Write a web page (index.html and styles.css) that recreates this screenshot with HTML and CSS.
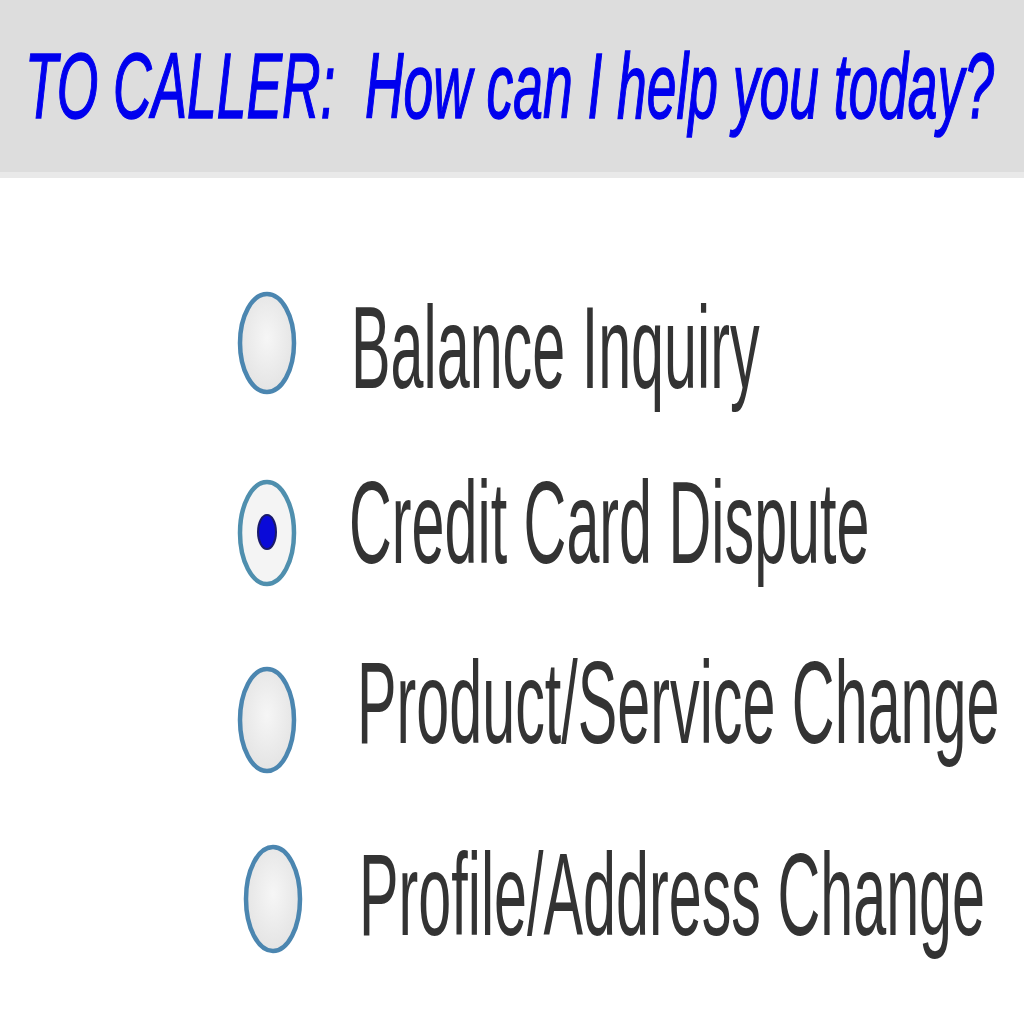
FILE: index.html
```html
<!DOCTYPE html>
<html lang="en">
<head>
<meta charset="utf-8">
<title>To Caller</title>
<link rel="stylesheet" href="styles.css">
</head>
<body>
<div class="page">
  <header class="prompt">
    <h1 class="prompt-text">TO CALLER:  How can I help you today?</h1>
  </header>
  <form class="options">
    <label class="option option-1">
      <svg class="radio" viewBox="0 0 60 106" width="60" height="106" aria-hidden="true">
        <defs>
          <radialGradient id="fill1" cx="50%" cy="45%" r="60%">
            <stop offset="0" stop-color="#f6f6f6"/>
            <stop offset="1" stop-color="#e2e2e2"/>
          </radialGradient>
        </defs>
        <ellipse cx="30" cy="53" rx="27" ry="49" fill="url(#fill1)" stroke="#4b86b0" stroke-width="4.5"/>
      </svg>
      <span class="label-text">Balance Inquiry</span>
    </label>
    <label class="option option-2">
      <svg class="radio" viewBox="0 0 60 110" width="60" height="110" aria-hidden="true">
        <ellipse cx="30" cy="55" rx="27" ry="51" fill="#f4f4f4" stroke="#4f8fae" stroke-width="4.5"/>
        <ellipse cx="30" cy="54" rx="9" ry="17" fill="#0a0ad8" stroke="#1a1a6a" stroke-width="2"/>
      </svg>
      <span class="label-text">Credit Card Dispute</span>
    </label>
    <label class="option option-3">
      <svg class="radio" viewBox="0 0 60 110" width="60" height="110" aria-hidden="true">
        <ellipse cx="30" cy="55" rx="27" ry="51" fill="url(#fill1)" stroke="#4b86b0" stroke-width="4.5"/>
      </svg>
      <span class="label-text">Product/Service Change</span>
    </label>
    <label class="option option-4">
      <svg class="radio" viewBox="0 0 60 112" width="60" height="112" aria-hidden="true">
        <ellipse cx="30" cy="56" rx="27" ry="52" fill="url(#fill1)" stroke="#4b86b0" stroke-width="4.5"/>
      </svg>
      <span class="label-text">Profile/Address Change</span>
    </label>
  </form>
</div>
</body>
</html>
```
FILE: styles.css
```css
html, body {
  margin: 0;
  padding: 0;
  background: #ffffff;
}
.page {
  width: 1024px;
  height: 1024px;
  overflow: hidden;
  font-family: "Liberation Sans", Arial, sans-serif;
}
.prompt {
  height: 172px;
  background: #dddddd;
  border-bottom: 6px solid #e9e9e9;
  box-sizing: content-box;
  padding: 0 0 0 25px;
}
.prompt-text {
  margin: 0;
  padding-top: 40px;
  font-size: 92px;
  line-height: 1;
  font-style: italic;
  font-weight: normal;
  color: #0000ee;
  -webkit-text-stroke: 1.5px #0000ee;
  white-space: pre;
  display: inline-block;
  transform: scaleX(0.58);
  transform-origin: left top;
}
.options {
  display: flex;
  flex-direction: column;
  padding-left: 237px;
  margin: 0;
}
.option {
  display: flex;
  align-items: flex-start;
  gap: 54px;
  height: 116px;
  white-space: nowrap;
}
.radio {
  flex: none;
  display: block;
}
.label-text {
  display: inline-block;
  font-size: 116px;
  line-height: 1;
  color: #333333;
  transform: scaleX(0.511);
  transform-origin: left top;
}
.option-1 { margin-top: 112px; }
.option-2 { margin-top: 59px; }
.option-2 .radio { margin-top: 13px; }
.option-2 .label-text { margin-left: -2px; }
.option-3 { margin-top: 64px; }
.option-3 .radio { margin-top: 20px; }
.option-3 .label-text { margin-left: 6px; }
.option-4 { margin-top: 76px; margin-left: 6px; }
.option-4 .radio { margin-top: 6px; }
.option-4 .label-text { margin-left: 2px; }
```
